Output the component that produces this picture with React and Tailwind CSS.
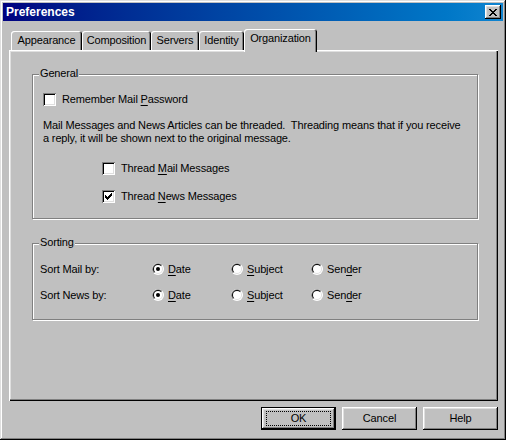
import React from "react";

const raised =
  "shadow-[inset_-1px_-1px_#000,inset_1px_1px_#fff,inset_-2px_-2px_#808080,inset_2px_2px_#dfdfdf]";

function U({ children }) {
  return <span className="underline underline-offset-[2px]">{children}</span>;
}

function Checkbox({ checked }) {
  return (
    <div className="w-[13px] h-[13px] shrink-0 bg-white flex items-center justify-center shadow-[inset_1px_1px_#808080,inset_-1px_-1px_#fff,inset_2px_2px_#000,inset_-2px_-2px_#dfdfdf]">
      {checked && (
        <svg width="7" height="7" viewBox="0 0 7 7" shapeRendering="crispEdges">
          <path
            fill="#000"
            d="M6 0h1v1h-1z M5 1h2v1h-2z M0 2h1v1h-1z M4 2h3v1h-3z M0 3h2v1h-2z M3 3h3v1h-3z M0 4h5v1h-5z M1 5h3v1h-3z M2 6h1v1h-1z"
          />
        </svg>
      )}
    </div>
  );
}

function Radio({ checked }) {
  return (
    <svg width="12" height="12" viewBox="0 0 12 12" className="shrink-0">
      <circle cx="6" cy="6" r="6" fill="#fff" />
      <path d="M1.76 10.24 A6 6 0 0 1 10.24 1.76 Z" fill="#808080" />
      <circle cx="6" cy="6" r="5" fill="#dfdfdf" />
      <path d="M2.46 9.54 A5 5 0 0 1 9.54 2.46 Z" fill="#000" />
      <circle cx="6" cy="6" r="4" fill="#fff" />
      {checked && <circle cx="6" cy="6" r="2" fill="#000" />}
    </svg>
  );
}

function Tab({ label, width, selected }) {
  if (selected) {
    return (
      <div
        className={`h-[23px] -mb-[2px] bg-[#c0c0c0] rounded-t-[3px] flex items-center justify-center pb-[4px] shadow-[inset_1px_1px_#fff,inset_-1px_0_#000,inset_-2px_0_#808080] ${width}`}
      >
        {label}
      </div>
    );
  }
  return (
    <div
      className={`h-[19px] bg-[#c0c0c0] rounded-t-[3px] flex items-center justify-center shadow-[inset_1px_1px_#fff,inset_-1px_0_#000,inset_-2px_0_#808080] ${width}`}
    >
      {label}
    </div>
  );
}

function GroupBox({ title, className, children }) {
  return (
    <div
      className={`relative border border-[#808080] shadow-[inset_1px_1px_#fff,1px_1px_#fff] ${className}`}
    >
      <span className="absolute left-[6px] top-[-8px] px-[1px] bg-[#c0c0c0] leading-[13px]">
        {title}
      </span>
      {children}
    </div>
  );
}

function Button({ children, isDefault }) {
  if (isDefault) {
    return (
      <div className="w-[75px] h-[23px] border border-black">
        <div className={`relative w-full h-full flex items-center justify-center ${raised}`}>
          <span className="absolute inset-x-[4px] inset-y-[3px] border border-dotted border-black" />
          {children}
        </div>
      </div>
    );
  }
  return (
    <div className={`w-[75px] h-[23px] flex items-center justify-center ${raised}`}>
      {children}
    </div>
  );
}

function SortRow({ label, className }) {
  return (
    <div className={`flex items-center h-[14px] ${className}`}>
      <div className="w-[112px]">{label}</div>
      <div className="w-[79px] flex items-center">
        <Radio checked />
        <span className="ml-[4px]">
          <U>D</U>ate
        </span>
      </div>
      <div className="w-[80px] flex items-center">
        <Radio />
        <span className="ml-[4px]">
          <U>S</U>ubject
        </span>
      </div>
      <div className="flex items-center">
        <Radio />
        <span className="ml-[4px]">
          Sen<U>d</U>er
        </span>
      </div>
    </div>
  );
}

export default function App() {
  return (
    <div className="w-[506px] h-[440px] bg-[#c0c0c0] p-[3px] flex flex-col text-[11px] tracking-[-0.15px] text-black font-['Liberation_Sans',Arial,sans-serif] shadow-[inset_-1px_-1px_#000,inset_1px_1px_#dfdfdf,inset_-2px_-2px_#808080,inset_2px_2px_#fff]">
      {/* title bar */}
      <div className="h-[18px] shrink-0 flex items-center justify-between pl-[3px] pr-[2px] bg-linear-to-r from-[#000080] to-[#1084d0]">
        <span className="text-white font-bold text-[12px] tracking-normal">Preferences</span>
        <div className={`w-[16px] h-[14px] flex items-center justify-center bg-[#c0c0c0] ${raised}`}>
          <svg width="8" height="7" viewBox="0 0 8 7" shapeRendering="crispEdges">
            <path
              fill="#000"
              d="M0 0h2v1h-2z M6 0h2v1h-2z M1 1h2v1h-2z M5 1h2v1h-2z M2 2h4v1h-4z M3 3h2v1h-2z M2 4h4v1h-4z M1 5h2v1h-2z M5 5h2v1h-2z M0 6h2v1h-2z M6 6h2v1h-2z"
            />
          </svg>
        </div>
      </div>

      <div className="pl-[6px] pr-[5px] pt-[8px] flex flex-col">
        {/* tabs */}
        <div className="h-[21px] flex items-end pl-[2px] relative z-10">
          <Tab label="Appearance" width="w-[71px]" />
          <Tab label="Composition" width="w-[69px]" />
          <Tab label="Servers" width="w-[48px]" />
          <Tab label="Identity" width="w-[45px]" />
          <Tab label="Organization" width="w-[73px]" selected />
        </div>

        {/* panel */}
        <div className="h-[351px] shadow-[inset_1px_1px_#fff,inset_-1px_-1px_#000,inset_-2px_-2px_#808080,inset_2px_2px_#dfdfdf] pt-[24px] pl-[23px]">
          <GroupBox title="General" className="w-[446px] h-[145px] pt-[18px] pl-[10px]">
            <div className="flex items-center h-[13px]">
              <Checkbox />
              <span className="ml-[6px]">
                Remember Mail <U>P</U>assword
              </span>
            </div>
            <p className="mt-[13px] leading-[13px] whitespace-pre">
              {"Mail Messages and News Articles can be threaded.  Threading means that if you receive\na reply, it will be shown next to the original message."}
            </p>
            <div className="flex items-center h-[13px] mt-[17px] ml-[59px]">
              <Checkbox />
              <span className="ml-[6px]">
                Thread <U>M</U>ail Messages
              </span>
            </div>
            <div className="flex items-center h-[13px] mt-[15px] ml-[59px]">
              <Checkbox checked />
              <span className="ml-[6px]">
                Thread <U>N</U>ews Messages
              </span>
            </div>
          </GroupBox>

          <GroupBox title="Sorting" className="w-[446px] h-[77px] mt-[24px] pt-[18px] pl-[7px]">
            <SortRow label="Sort Mail by:" />
            <SortRow label="Sort News by:" className="mt-[12px]" />
          </GroupBox>
        </div>

        {/* buttons */}
        <div className="mt-[6px] flex justify-end gap-[6px]">
          <Button isDefault>OK</Button>
          <Button>Cancel</Button>
          <Button>Help</Button>
        </div>
      </div>
    </div>
  );
}
